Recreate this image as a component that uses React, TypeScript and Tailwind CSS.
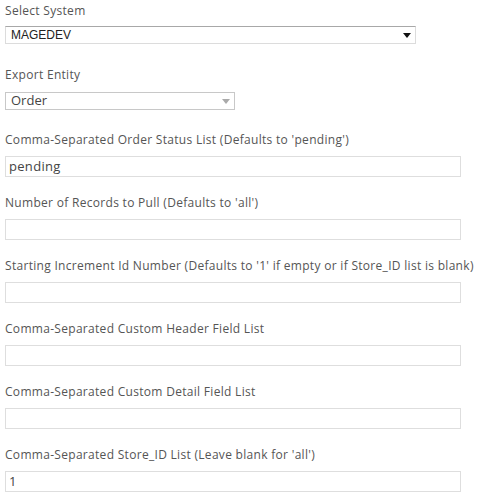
import React from "react";

const fields = [
  { label: "Comma-Separated Order Status List (Defaults to 'pending')", value: "pending" },
  { label: "Number of Records to Pull (Defaults to 'all')", value: "" },
  { label: "Starting Increment Id Number (Defaults to '1' if empty or if Store_ID list is blank)", value: "" },
  { label: "Comma-Separated Custom Header Field List", value: "" },
  { label: "Comma-Separated Custom Detail Field List", value: "" },
  { label: "Comma-Separated Store_ID List (Leave blank for 'all')", value: "1" },
];

export default function App() {
  return (
    <div className="min-h-[501px] w-[479px] bg-white pl-[5px] pt-[3px] font-['Open_Sans',sans-serif] text-[12px] tracking-[0.3px] text-[#555]">
      <div className="h-[16px] leading-[16px]">Select System</div>
      <div className="mt-[7px] flex h-[18px] w-[411px] items-center justify-between border border-[#dcdcdc] border-t-[#a8a8a8] bg-white pl-[5px] pr-[4px] font-['Liberation_Sans',sans-serif] text-[12px] tracking-normal text-[#222]">
        <span>MAGEDEV</span>
        <span className="h-0 w-0 border-x-[4px] border-t-[5px] border-x-transparent border-t-[#111]" />
      </div>

      <div className="mt-[23px] h-[16px] leading-[16px]">Export Entity</div>
      <div className="mt-[9px] flex h-[18px] w-[230px] items-center justify-between border border-[#c8c8c8] bg-white pl-[5px] pr-[4px] text-[13px] tracking-normal text-[#444]">
        <span>Order</span>
        <span className="h-0 w-0 border-x-[4px] border-t-[5px] border-x-transparent border-t-[#aaa]" />
      </div>

      {fields.map((f, i) => (
        <div key={i} className={i === 0 ? "mt-[22px]" : "mt-[18px]"}>
          <div className="h-[16px] whitespace-nowrap leading-[16px]">{f.label}</div>
          <div className="mt-[8px] flex h-[21px] w-[456px] items-center border border-[#dedede] bg-white pl-[3px] text-[13px] text-[#444]">
            {f.value}
          </div>
        </div>
      ))}
    </div>
  );
}
